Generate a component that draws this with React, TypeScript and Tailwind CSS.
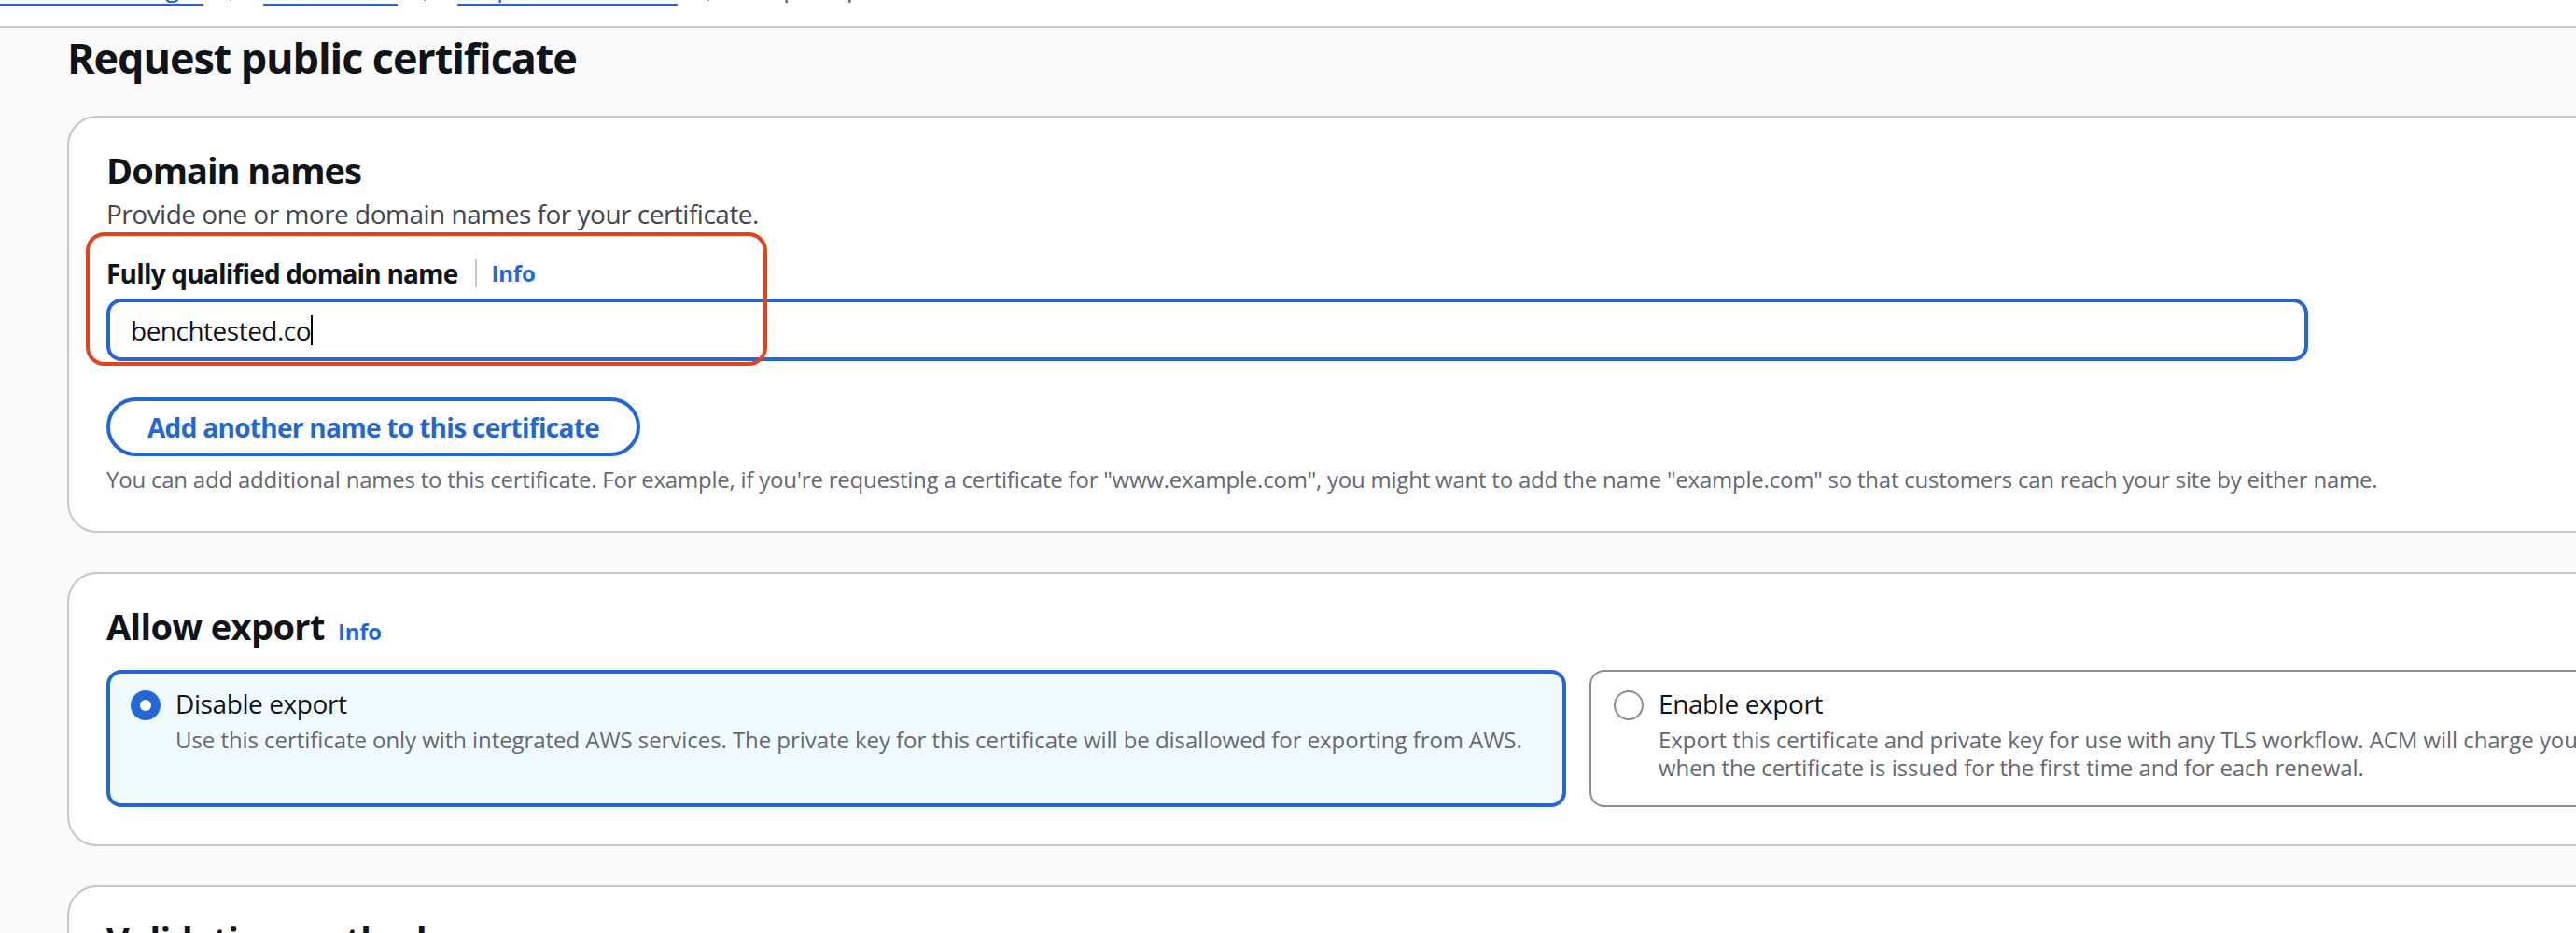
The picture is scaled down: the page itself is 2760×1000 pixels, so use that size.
import React from "react";

const Chevron = () => (
  <svg width="16" height="16" viewBox="0 0 16 16" fill="none">
    <path d="M5 2l6 6-6 6" stroke="#8c8c94" strokeWidth="2" strokeLinecap="round" strokeLinejoin="round" />
  </svg>
);

const InfoLink = ({ className = "" }: { className?: string }) => (
  <span className={"text-[24px] font-bold text-[#2366d6] tracking-[-0.2px] " + className}>Info</span>
);

export default function App() {
  return (
    <div className="w-[2760px] h-[1000px] overflow-hidden bg-[#fafafa] text-[#0f141a] font-['Open_Sans','Noto_Sans',sans-serif]">
      {/* breadcrumbs bar */}
      <div className="h-[30px] bg-white border-b-2 border-[#c6c6cd] overflow-hidden">
        <div className="flex -mt-[34px] h-[40px] text-[28px] leading-[38px] whitespace-nowrap tracking-[-0.5px]">
          <div className="w-[218px] h-[40px] border-b-2 border-[#2366d6] text-[#2366d6] flex justify-end overflow-hidden">
            AWS Certificate Manager
          </div>
          <div className="w-[64px] h-[40px] flex justify-center items-end pb-[4px]">
            <Chevron />
          </div>
          <div className="w-[144px] h-[40px] border-b-2 border-[#2366d6] text-[#2366d6] overflow-hidden">
            Certificates
          </div>
          <div className="w-[64px] h-[40px] flex justify-center items-end pb-[4px]">
            <Chevron />
          </div>
          <div className="w-[236px] h-[40px] border-b-2 border-[#2366d6] text-[#2366d6] overflow-hidden">
            Request certificate
          </div>
          <div className="w-[71px] h-[40px] flex justify-center items-end pb-[4px]">
            <Chevron />
          </div>
          <div className="h-[40px] text-[#656871]">Request public certificate</div>
        </div>
      </div>

      <main className="pl-[72px] pt-[2px]">
        <h1 className="text-[45px] leading-[60px] font-bold tracking-[-1.1px]">Request public certificate</h1>

        <div className="mt-[32px] flex flex-col gap-[42px]">
          {/* Domain names */}
          <section className="relative w-[3320px] bg-white border-2 border-[#c6c6cd] rounded-[32px] pl-[40px] pt-[32px] pb-[39px]">
            <h2 className="text-[38px] leading-[48px] font-bold tracking-[-1px]">Domain names</h2>
            <p className="mt-[3px] text-[28px] leading-[40px] text-[#424650] tracking-[-0.5px]">
              Provide one or more domain names for your certificate.
            </p>
            <div className="mt-[24px] h-[40px] flex items-center">
              <span className="text-[28px] leading-[40px] font-bold tracking-[-0.8px]">Fully qualified domain name</span>
              <span className="ml-[18px] w-[2px] h-[30px] bg-[#c6c6cd]" />
              <InfoLink className="ml-[16px] leading-[40px]" />
            </div>
            <div className="mt-[7px] w-[2359px] h-[67px] border-4 border-[#2366d6] rounded-[16px] pl-[22px] flex items-center text-[28px] tracking-[-0.5px]">
              <span>benchtested.co</span>
              <span className="w-[2px] h-[32px] bg-black" />
            </div>
            <button className="mt-[39px] h-[63px] inline-flex items-center border-4 border-[#2366d6] rounded-full px-[40px] text-[28px] font-bold text-[#2366d6] bg-white tracking-[-0.7px]">
              Add another name to this certificate
            </button>
            <p className="mt-[9px] text-[24px] leading-[32px] text-[#656871] tracking-[-0.22px]">
              You can add additional names to this certificate. For example, if you're requesting a certificate for "www.example.com", you might want to add the name "example.com" so that customers can reach your site by either name.
            </p>
            <div className="absolute left-[18px] top-[123px] w-[730px] h-[143px] border-4 border-[#e4411d] rounded-[20px] pointer-events-none" />
          </section>

          {/* Allow export */}
          <section className="w-[3320px] bg-white border-2 border-[#c6c6cd] rounded-[32px] pl-[40px] pt-[32px] pb-[40px]">
            <h2 className="text-[38px] leading-[48px] font-bold tracking-[-0.6px]">
              Allow export
              <InfoLink className="ml-[14px] leading-[24px]" />
            </h2>
            <div className="mt-[23px] grid grid-cols-[1564px_1564px] gap-x-[25px]">
              <div className="border-4 border-[#2366d6] bg-[#f0fbff] rounded-[16px] px-[22px] pt-[12px] pb-[23px] flex gap-[16px]">
                <span className="mt-[6px] w-[32px] h-[32px] shrink-0 rounded-full bg-[#2366d6] flex items-center justify-center">
                  <span className="w-[12px] h-[12px] rounded-full bg-white" />
                </span>
                <div>
                  <div className="text-[28px] leading-[40px] tracking-[-0.4px]">Disable export</div>
                  <div className="mt-[4px] text-[24px] leading-[30px] text-[#656871] whitespace-nowrap tracking-[-0.06px]">
                    Use this certificate only with integrated AWS services. The private key for this certificate will be disallowed for exporting from AWS.
                  </div>
                </div>
              </div>
              <div className="border-2 border-[#8c8c94] bg-white rounded-[16px] px-[24px] pt-[14px] pb-[25px] flex gap-[16px]">
                <span className="mt-[6px] w-[32px] h-[32px] shrink-0 rounded-full border-2 border-[#8c8c94] bg-white" />
                <div>
                  <div className="text-[28px] leading-[40px] tracking-[-0.4px]">Enable export</div>
                  <div className="mt-[4px] text-[24px] leading-[30px] text-[#656871] whitespace-nowrap tracking-[-0.06px]">
                    <div>Export this certificate and private key for use with any TLS workflow. ACM will charge you a fee</div>
                    <div>when the certificate is issued for the first time and for each renewal.</div>
                  </div>
                </div>
              </div>
            </div>
          </section>

          {/* Validation method */}
          <section className="w-[3320px] h-[300px] bg-white border-2 border-[#c6c6cd] rounded-[32px] pl-[40px] pt-[32px]">
            <h2 className="text-[38px] leading-[48px] font-bold tracking-[-0.6px]">Validation method</h2>
          </section>
        </div>
      </main>
    </div>
  );
}
